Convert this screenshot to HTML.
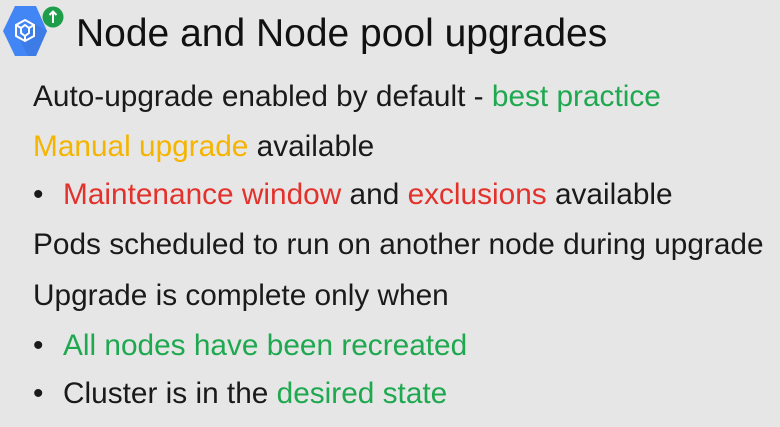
<!DOCTYPE html>
<html><head><style>
body{margin:0;width:780px;height:427px;background:#e6e6e6;font-family:"Liberation Sans",Arial,sans-serif;color:#1a1a1a;position:relative;overflow:hidden}
.t{position:absolute;white-space:nowrap;font-size:29.8px;line-height:30px}
.g{color:#1ea84f}.o{color:#f5b400}.r{color:#e3312b}
.title{position:absolute;left:76px;top:12px;font-size:39px;line-height:44px;color:#111;white-space:nowrap}
.b{display:inline-block;width:30px}
</style></head><body>
<svg style="position:absolute;left:0;top:0" width="70" height="60" viewBox="0 0 70 60">
<polygon points="15,6 36,6 47,31 36,56 15,56 3,31" fill="#4285f4"/>
<polygon points="32,22 47,31 36,56 28,56 20,40" fill="#3a75dc" opacity=".6"/>
<g fill="none" stroke="#fff" stroke-width="2">
<polygon points="25,20 34,25 34,36 25,41 16,36 16,25"/>
<polygon points="25,25 29,28 29,33 25,36 21,33 21,28"/>
<path d="M21,28 L16,25 M29,28 L34,25 M25,36 L25,41"/>
</g>
<circle cx="53" cy="17" r="10.5" fill="#1e9e4a"/>
<path d="M53,23 V12 M49.5,15 L53,11.5 L56.5,15" stroke="#fff" stroke-width="2" fill="none"/>
</svg>
<div class="title">Node and Node pool upgrades</div>
<div class="t" style="left:33px;top:82px">Auto-upgrade enabled by default - <span class="g">best practice</span></div>
<div class="t" style="left:33px;top:132px"><span class="o">Manual upgrade</span> available</div>
<div class="t" style="left:33px;top:180px"><span class="b">•</span><span class="r">Maintenance window</span> and <span class="r">exclusions</span> available</div>
<div class="t" style="left:33px;top:230px">Pods scheduled to run on another node during upgrade</div>
<div class="t" style="left:33px;top:281px">Upgrade is complete only when</div>
<div class="t" style="left:33px;top:331px"><span class="b">•</span><span class="g">All nodes have been recreated</span></div>
<div class="t" style="left:33px;top:379px"><span class="b">•</span>Cluster is in the <span class="g">desired state</span></div>
</body></html>
